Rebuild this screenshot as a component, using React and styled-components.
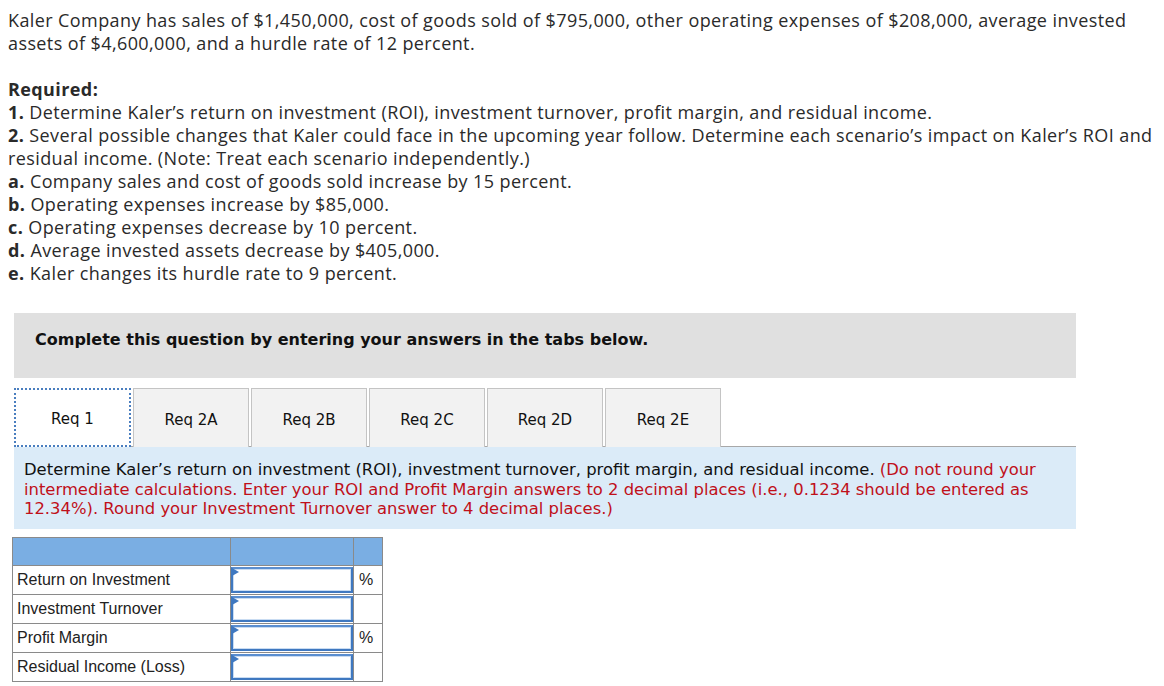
import React from 'react';
import styled, { createGlobalStyle } from 'styled-components';

const Global = createGlobalStyle`
  body {
    margin: 0;
    background: #fff;
  }
`;

const Page = styled.div`
  padding: 9px 8px 0 8px;
  width: 1164px;
  box-sizing: border-box;
`;

const Prose = styled.div`
  width: 1152px;
  font-family: 'Open Sans', 'Liberation Sans', sans-serif;
  font-size: 18px;
  letter-spacing: 0.4px;
  line-height: 23px;
  color: #2a2a2a;
  p {
    margin: 0;
  }
  p + p {
    margin-top: 23px;
  }
  b {
    font-weight: 700;
  }
`;

const Panel = styled.div`
  margin: 28px 0 0 6px;
  width: 1062px;
`;

const Banner = styled.div`
  height: 65px;
  box-sizing: border-box;
  padding: 17px 0 0 21px;
  background: #e0e0e0;
  font-family: 'DejaVu Sans', Verdana, sans-serif;
  font-size: 16px;
  font-weight: 700;
  color: #111;
`;

const Tabs = styled.div`
  display: flex;
  gap: 2px;
  margin-top: 10px;
  border-bottom: 1px solid #a8a8a8;
`;

const Tab = styled.div`
  display: flex;
  align-items: center;
  justify-content: center;
  width: ${p => (p.$active ? '117px' : '116px')};
  height: 59px;
  box-sizing: border-box;
  padding-top: 3px;
  margin-bottom: -1px;
  font-family: 'DejaVu Sans', Verdana, sans-serif;
  font-size: 15px;
  color: #111;
  background: ${p => (p.$active ? '#fff' : '#f2f2f2')};
  border: ${p => (p.$active ? '2px dotted #4a7ebf' : '1px solid #c4c4c4')};
  border-bottom: ${p => (p.$active ? '2px dotted #4a7ebf' : 'none')};
`;

const Instructions = styled.div`
  padding: 13px 10px 10px 10px;
  background: #dbebf8;
  font-family: 'DejaVu Sans', Verdana, sans-serif;
  font-size: 16.4px;
  line-height: 19.5px;
  color: #111;
  span {
    color: #c0101a;
  }
`;

const Grid = styled.table`
  margin: 8px 0 0 -2px;
  border-collapse: collapse;
  font-family: 'Liberation Sans', Arial, sans-serif;
  font-size: 16px;
  color: #222;
  td {
    border: 1px solid #8a8a8a;
    padding: 0;
    height: 27.75px;
  }
`;

const HeadRow = styled.tr`
  td {
    background: #7aaee3;
  }
`;

const LabelCell = styled.td`
  width: 213px;
  padding-left: 4px !important;
`;

const InputCell = styled.td`
  width: 122px;
  position: relative;
`;

const UnitCell = styled.td`
  width: 29px;
  padding-left: 5px !important;
  box-sizing: border-box;
`;

const Field = styled.div`
  box-sizing: border-box;
  height: 26px;
  margin: 1px 0;
  border: 2px solid #3f78c0;
  border-top-color: #5a8ed0;
  background: #fff;
  box-shadow: inset 0 0 0 1px #c9dcf2;
`;

const Flag = styled.div`
  position: absolute;
  top: 2px;
  left: 1px;
  width: 0;
  height: 0;
  border-top: 4px solid transparent;
  border-bottom: 4px solid transparent;
  border-left: 7px solid #3f78c0;
`;

const rows = [
  { label: 'Return on Investment', unit: '%' },
  { label: 'Investment Turnover', unit: '' },
  { label: 'Profit Margin', unit: '%' },
  { label: 'Residual Income (Loss)', unit: '' },
];

const tabs = ['Req 1', 'Req 2A', 'Req 2B', 'Req 2C', 'Req 2D', 'Req 2E'];

const App = () => (
  <Page>
    <Global />
    <Prose>
      <p>
        Kaler Company has sales of $1,450,000, cost of goods sold of $795,000, other operating
        expenses of $208,000, average invested assets of $4,600,000, and a hurdle rate of 12 percent.
      </p>
      <p>
        <b>Required:</b>
        <br />
        <b>1.</b> Determine Kaler’s return on investment (ROI), investment turnover, profit margin,
        and residual income.
        <br />
        <b>2.</b> Several possible changes that Kaler could face in the upcoming year follow.
        Determine each scenario’s impact on Kaler’s ROI and residual income. (Note: Treat each
        scenario independently.)
        <br />
        <b>a.</b> Company sales and cost of goods sold increase by 15 percent.
        <br />
        <b>b.</b> Operating expenses increase by $85,000.
        <br />
        <b>c.</b> Operating expenses decrease by 10 percent.
        <br />
        <b>d.</b> Average invested assets decrease by $405,000.
        <br />
        <b>e.</b> Kaler changes its hurdle rate to 9 percent.
      </p>
    </Prose>
    <Panel>
      <Banner>Complete this question by entering your answers in the tabs below.</Banner>
      <Tabs>
        {tabs.map((t, i) => (
          <Tab key={t} $active={i === 0}>
            {t}
          </Tab>
        ))}
      </Tabs>
      <Instructions>
        Determine Kaler’s return on investment (ROI), investment turnover, profit margin, and
        residual income.{' '}
        <span>
          (Do not round your intermediate calculations. Enter your ROI and Profit Margin answers to
          2 decimal places (i.e., 0.1234 should be entered as 12.34%). Round your Investment
          Turnover answer to 4 decimal places.)
        </span>
      </Instructions>
      <Grid>
        <tbody>
          <HeadRow>
            <LabelCell />
            <InputCell />
            <UnitCell />
          </HeadRow>
          {rows.map(r => (
            <tr key={r.label}>
              <LabelCell>{r.label}</LabelCell>
              <InputCell>
                <Field />
                <Flag />
              </InputCell>
              <UnitCell>{r.unit}</UnitCell>
            </tr>
          ))}
        </tbody>
      </Grid>
    </Panel>
  </Page>
);

export default App;
